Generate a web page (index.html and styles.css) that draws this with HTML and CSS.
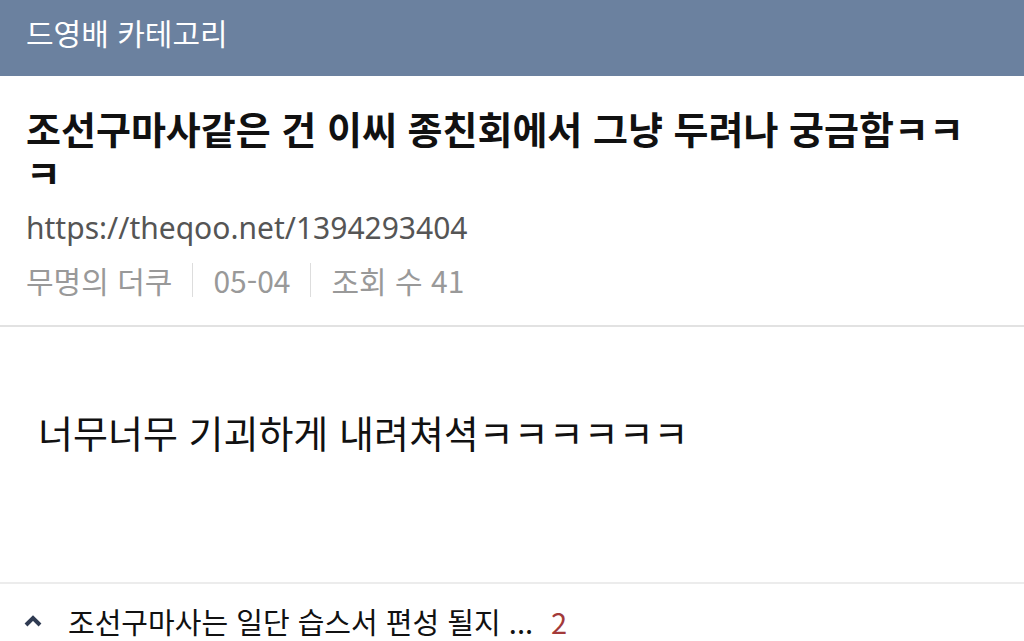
FILE: index.html
```html
<!DOCTYPE html>
<html lang="ko">
<head>
    <meta charset="UTF-8">
    <meta name="viewport" content="width=device-width, initial-scale=1.0">
    <title>드영배 카테고리</title>
    <link rel="stylesheet" href="styles.css">
</head>
<body>
    <header class="board-header">드영배 카테고리</header>
    <div class="post-head">
        <h1 class="post-title">조선구마사같은 건 이씨 종친회에서 그냥 두려나 궁금함ㅋㅋㅋ</h1>
        <div class="post-url">https://theqoo.net/1394293404</div>
        <div class="post-meta">
            <span>무명의 더쿠</span>
            <span class="sep"></span>
            <span>05-04</span>
            <span class="sep"></span>
            <span>조회 수 41</span>
        </div>
    </div>
    <div class="post-body">너무너무 기괴하게 내려쳐셕ㅋㅋㅋㅋㅋㅋ</div>
    <div class="prev-post">
        <svg class="chevron" width="18" height="12" viewBox="0 0 18 12">
            <path d="M2 10 L9 3 L16 10" fill="none" stroke="#2f3b52" stroke-width="4"/>
        </svg>
        <span class="prev-title">조선구마사는 일단 습스서 편성 될지 ...</span>
        <span class="prev-count">2</span>
    </div>
</body>
</html>
```

FILE: styles.css
```css
body {
    margin: 0;
    padding: 0;
    background-color: #fff;
    font-family: "Noto Sans CJK KR", "Noto Sans", sans-serif;
    color: #111;
}
.board-header {
    height: 76px;
    background-color: #6b819f;
    color: #fff;
    font-size: 30px;
    line-height: 64px;
    padding-left: 26px;
    box-sizing: border-box;
}
.post-head {
    padding: 30px 40px 25px 26px;
    border-bottom: 2px solid #e2e2e2;
}
.post-title {
    margin: 0;
    font-size: 38px;
    font-weight: bold;
    line-height: 44px;
    color: #111;
    word-break: break-all;
}
.post-url {
    margin-top: 14px;
    font-size: 30px;
    line-height: 40px;
    color: #555;
    font-family: "Noto Sans", "Noto Sans CJK KR", sans-serif;
}
.post-meta {
    display: flex;
    align-items: center;
    margin-top: 12px;
    font-size: 30px;
    line-height: 40px;
    color: #999;
}
.post-meta .sep {
    width: 1px;
    height: 34px;
    background-color: #ddd;
    margin: 0 20px;
}
.post-body {
    height: 257px;
    box-sizing: border-box;
    padding: 81px 0 0 38px;
    font-size: 38px;
    line-height: 48px;
    color: #111;
    border-bottom: 2px solid #ececec;
}
.prev-post {
    display: flex;
    align-items: center;
    padding: 19px 0 0 24px;
    font-size: 29px;
    line-height: 36px;
}
.chevron {
    margin-right: 26px;
}
.prev-count {
    color: #a33a3a;
    margin-left: 18px;
}
```
